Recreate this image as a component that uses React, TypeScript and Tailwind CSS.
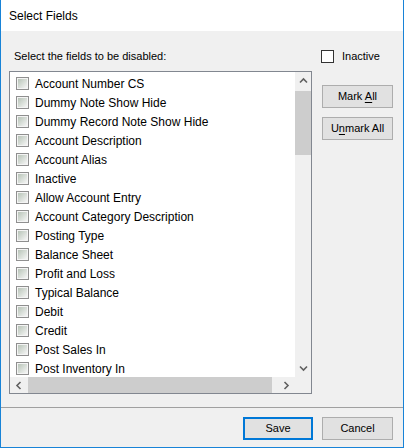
import React from "react";

const items = [
  "Account Number CS",
  "Dummy Note Show Hide",
  "Dummy Record Note Show Hide",
  "Account Description",
  "Account Alias",
  "Inactive",
  "Allow Account Entry",
  "Account Category Description",
  "Posting Type",
  "Balance Sheet",
  "Profit and Loss",
  "Typical Balance",
  "Debit",
  "Credit",
  "Post Sales In",
  "Post Inventory In",
];

const Chevron = ({ dir }: { dir: "up" | "down" | "left" | "right" }) => {
  const pts: Record<string, string> = {
    up: "1,5.5 4.5,2 8,5.5",
    down: "1,2.5 4.5,6 8,2.5",
    left: "5.5,1 2,4.5 5.5,8",
    right: "2.5,1 6,4.5 2.5,8",
  };
  return (
    <svg width="9" height="9" viewBox="0 0 9 9">
      <polyline points={pts[dir]} fill="none" stroke="#606060" strokeWidth="1.6" />
    </svg>
  );
};

const ListCheck = () => (
  <div className="w-[13px] h-[13px] border border-[#8f8f8f] bg-[#f4f4f4] p-[1px] shrink-0">
    <div className="w-full h-full bg-linear-to-br from-[#b8c4b8] to-[#f6f6f6]" />
  </div>
);

export default function App() {
  return (
    <div
      className="w-[404px] h-[448px] flex flex-col border-x border-b border-[#1883d7] bg-[#f0f0f0] text-black"
      style={{ fontFamily: '"Liberation Sans", Arial, sans-serif' }}
    >
      {/* Title bar */}
      <div className="h-[31px] bg-white flex items-center pl-[8px] text-[12px] shrink-0">
        Select Fields
      </div>

      {/* Main content */}
      <div className="flex flex-row pl-[8px]">
        {/* Left column */}
        <div className="flex flex-col pt-[18px]">
          <div className="h-[14px] flex items-center pl-[5px] text-[11px] leading-none">
            Select the fields to be disabled:
          </div>
          <div className="mt-[8px] w-[303px] h-[323px] border border-[#828790] bg-white flex flex-col">
            <div className="flex flex-row flex-1 min-h-0">
              <div className="flex-1 overflow-hidden pt-[2px] text-[12px]">
                {items.map((it) => (
                  <div key={it} className="h-[19px] flex items-center pl-[6px] gap-[6px] whitespace-nowrap">
                    <ListCheck />
                    <span className="leading-none">{it}</span>
                  </div>
                ))}
              </div>
              <div className="w-[16px] bg-[#f0f0f0] flex flex-col">
                <div className="h-[19px] flex items-center justify-center">
                  <Chevron dir="up" />
                </div>
                <div className="h-[64px] bg-[#cdcdcd]" />
                <div className="flex-1" />
                <div className="h-[17px] flex items-center justify-center">
                  <Chevron dir="down" />
                </div>
              </div>
            </div>
            <div className="h-[16px] flex flex-row bg-[#f0f0f0]">
              <div className="w-[18px] flex items-center justify-center">
                <Chevron dir="left" />
              </div>
              <div className="w-[244px] bg-[#cdcdcd]" />
              <div className="flex-1 flex items-center justify-end pr-[4px]">
                <Chevron dir="right" />
              </div>
              <div className="w-[16px]" />
            </div>
          </div>
        </div>

        {/* Right column */}
        <div className="flex flex-col pt-[19px] ml-[9px] text-[11px]">
          <div className="h-[13px] flex items-center gap-[8px]">
            <div className="w-[13px] h-[13px] border border-[#333333] bg-white" />
            <span className="leading-none">Inactive</span>
          </div>
          <div className="mt-[22px] ml-[1px] w-[71px] h-[23px] border border-[#adadad] bg-[#e1e1e1] flex items-center justify-center">
            <span>
              Mark <span className="underline underline-offset-2">A</span>ll
            </span>
          </div>
          <div className="mt-[9px] ml-[1px] w-[71px] h-[23px] border border-[#adadad] bg-[#e1e1e1] flex items-center justify-center">
            <span>
              U<span className="underline underline-offset-2">n</span>mark All
            </span>
          </div>
        </div>
      </div>

      {/* Separator */}
      <div className="mt-[13px] h-px bg-[#a0a0a0]" />

      {/* Bottom buttons */}
      <div className="flex flex-row justify-end gap-[9px] pt-[9px] pr-[10px] text-[11px]">
        <div className="w-[70px] h-[23px] border-2 border-[#0078d7] bg-[#e1e1e1] flex items-center justify-center">
          Save
        </div>
        <div className="w-[71px] h-[23px] border border-[#adadad] bg-[#e1e1e1] flex items-center justify-center">
          Cancel
        </div>
      </div>
    </div>
  );
}
